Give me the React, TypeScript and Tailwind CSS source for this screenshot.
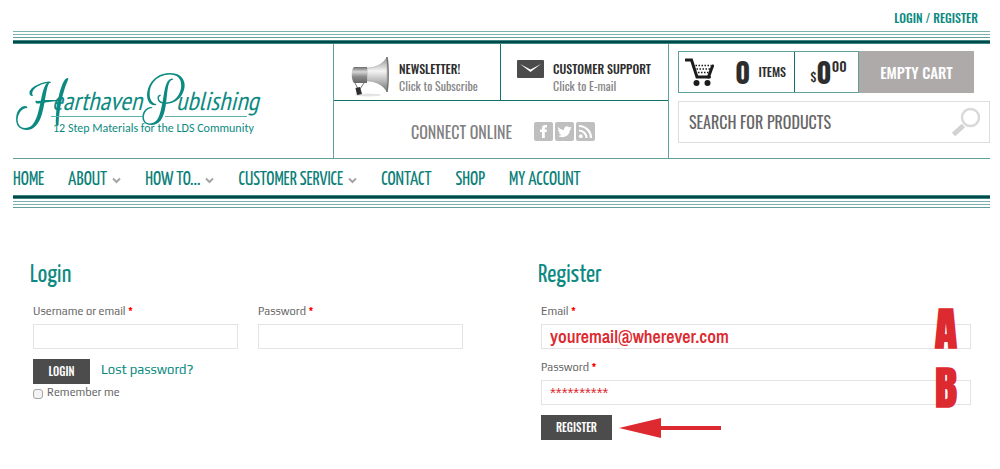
import { useState } from 'react';

const navigation = [
  { name: 'HOME', href: '#home', hasMenu: false },
  { name: 'ABOUT', href: '#about', hasMenu: true },
  { name: 'HOW TO...', href: '#how-to', hasMenu: true },
  { name: 'CUSTOMER SERVICE', href: '#customer-service', hasMenu: true },
  { name: 'CONTACT', href: '#contact', hasMenu: false },
  { name: 'SHOP', href: '#shop', hasMenu: false },
  { name: 'MY ACCOUNT', href: '#my-account', hasMenu: false },
];

function ThinRules() {
  return (
    <div className="flex flex-col gap-[2px]">
      <div className="h-px bg-[#7db1af]"></div>
      <div className="h-px bg-[#7db1af]"></div>
      <div className="h-px bg-[#5f9f9c]"></div>
    </div>
  );
}

function ThickRule() {
  return <div className="h-1 border-y border-[#3f8583] bg-[#004b49]"></div>;
}

function Logo() {
  return (
    <svg width="250" height="80" viewBox="0 0 250 80" role="img" aria-label="Hearthaven Publishing">
      <g fill="#0c8a82">
        <text x="3" y="62" fontSize="70" fontFamily="'Euphoria Script', 'Liberation Serif', cursive">H</text>
        <text x="39" y="49" fontSize="26" fontStyle="italic" fontFamily="'PT Sans Narrow', 'Liberation Sans', sans-serif">earthaven</text>
        <text x="131" y="58" fontSize="70" fontFamily="'Rouge Script', 'Liberation Serif', cursive">P</text>
        <text x="163" y="49" fontSize="26" fontStyle="italic" fontFamily="'PT Sans Narrow', 'Liberation Sans', sans-serif">ublishing</text>
        <text x="40" y="71" fontSize="12" fontFamily="Carlito, Lato, sans-serif">
          12 Step Materials for the LDS Community
        </text>
      </g>
      <path d="M38 55.500H130M152 55.500H234" stroke="#5fb0aa" strokeWidth="1" />
    </svg>
  );
}

function MegaphoneIcon() {
  return (
    <svg width="40" height="42" viewBox="0 0 40 42" aria-hidden="true">
      <defs>
        <linearGradient id="horn" x1="0" y1="0" x2="0" y2="1">
          <stop offset="0" stopColor="#8d8d8d" />
          <stop offset="0.4" stopColor="#f4f4f4" />
          <stop offset="0.7" stopColor="#b5b5b5" />
          <stop offset="1" stopColor="#6f6f6f" />
        </linearGradient>
        <linearGradient id="body" x1="0" y1="0" x2="0" y2="1">
          <stop offset="0" stopColor="#6a6a6a" />
          <stop offset="0.3" stopColor="#d8d8d8" />
          <stop offset="0.6" stopColor="#8c8c8c" />
          <stop offset="1" stopColor="#666" />
        </linearGradient>
      </defs>
      <ellipse cx="18" cy="39" rx="13" ry="1.5" fill="#e4e4e4" />
      <path d="M5 27L8 33M14 27L10 33" stroke="#777" strokeWidth="1" fill="none" />
      <path d="M5.500 32L10 31L12 38L7 39Z" fill="#2d2d2d" />
      <path d="M17 12C26 12 33 8 37 1V36C33 29 26 25 17 25Z" fill="url(#horn)" stroke="#999" strokeWidth="0.5" />
      <path d="M4 11C1 13 1 24 4 27H17V11Z" fill="url(#body)" />
      <path d="M37 1C38.500 10 38.500 27 37 36" stroke="#707070" strokeWidth="1.500" fill="none" />
    </svg>
  );
}

function EnvelopeIcon() {
  return (
    <svg width="27" height="18" viewBox="0 0 27 18" aria-hidden="true">
      <rect width="27" height="18" rx="1" fill="#4c4c4c" />
      <path d="M3 4L13.500 9.500L24 4L13.500 12Z" fill="#fff" />
    </svg>
  );
}

function CartIcon() {
  return (
    <svg width="29" height="28" viewBox="0 0 29 28" fill="none" aria-hidden="true">
      <path d="M1 2H6.500L12 19H24.500" stroke="#1c1c1c" strokeWidth="3" strokeLinecap="round" />
      <path d="M23.500 19L27.500 8" stroke="#1c1c1c" strokeWidth="3" strokeLinecap="round" />
      <path d="M10.500 7.500H26M11.500 11H25M13 14.500H24" stroke="#1c1c1c" strokeWidth="1.500" strokeDasharray="1.500 1.500" />
      <circle cx="11.500" cy="25" r="3" fill="#1c1c1c" />
      <circle cx="22.500" cy="25" r="3" fill="#1c1c1c" />
    </svg>
  );
}

function SearchIcon() {
  return (
    <svg width="30" height="30" viewBox="0 0 30 30" fill="none" aria-hidden="true">
      <circle cx="19.500" cy="10.500" r="8.500" stroke="#d9d9d9" strokeWidth="2.500" />
      <path d="M12.500 18.500L2.500 27.500" stroke="#d2d2d2" strokeWidth="5" />
    </svg>
  );
}

function MenuArrow() {
  return (
    <svg width="9" height="7" viewBox="0 0 9 7" fill="none" aria-hidden="true">
      <path d="M1 1.500L4.500 5L8 1.500" stroke="#a5a5a5" strokeWidth="2" />
    </svg>
  );
}

function SocialLinks() {
  return (
    <div className="flex gap-[2px]">
      <a href="#facebook" aria-label="Facebook">
        <svg width="19" height="19" viewBox="0 0 19 19">
          <rect width="19" height="19" rx="2" fill="#bfbfbf" />
          <path d="M8 16V10H6V7.500H8V6C8 3.800 9.300 3 11 3H13V5.500H11.700C11 5.500 10.800 5.800 10.800 6.400V7.500H13L12.700 10H10.800V16Z" fill="#fff" />
        </svg>
      </a>
      <a href="#twitter" aria-label="Twitter">
        <svg width="19" height="19" viewBox="0 0 19 19">
          <rect width="19" height="19" rx="2" fill="#bfbfbf" />
          <path d="M3 5C5 7 7 7.800 9 8C8.800 5 11 3.800 12.800 4.500C13.500 4.700 14 5.200 14.300 5.300L16.500 5L15.200 6.700L16.500 7L14.800 8.300C14.500 13 10.500 15.800 6 15C4.500 14.700 3.500 14.200 3 13.800C4.800 13.800 5.800 13.300 6.500 12.700C5 12.500 4.200 11.600 4 10.700H5.300C3.800 10 3 8.800 3 7.700L4.200 8C3 7 2.700 6 3 5Z" fill="#fff" />
        </svg>
      </a>
      <a href="#rss" aria-label="RSS">
        <svg width="19" height="19" viewBox="0 0 19 19">
          <rect width="19" height="19" rx="2" fill="#bfbfbf" />
          <circle cx="4.800" cy="14.200" r="1.900" fill="#fff" />
          <path d="M3 8.500A7.500 7.500 0 0 1 10.500 16M3 4A12 12 0 0 1 15 16" stroke="#fff" strokeWidth="2.200" fill="none" />
        </svg>
      </a>
    </div>
  );
}

function Field({
  id,
  label,
  type,
  value,
  onChange,
  className = '',
}: {
  id: string;
  label: string;
  type: string;
  value: string;
  onChange: (value: string) => void;
  className?: string;
}) {
  return (
    <div>
      <label htmlFor={id} className="block text-[11px] leading-4 text-[#666]">
        {label} <span className="font-bold text-[#f00]">*</span>
      </label>
      <input
        id={id}
        type={type}
        value={value}
        onChange={(e) => onChange(e.target.value)}
        className={`mt-[5px] block h-[25px] w-full border border-[#e3e3e3] bg-white px-2 text-[#dd2a30] outline-none ${className}`}
      />
    </div>
  );
}

export default function App() {
  const [search, setSearch] = useState('');
  const [username, setUsername] = useState('');
  const [password, setPassword] = useState('');
  const [remember, setRemember] = useState(false);
  const [email, setEmail] = useState('youremail@wherever.com');
  const [newPassword, setNewPassword] = useState('**********');

  return (
    <div className="bg-white pr-[10px] pl-[13px] font-['Oswald','Roboto_Condensed',sans-serif]">
      {/* Top bar */}
      <div className="flex h-[31px] items-center justify-end pt-1 pr-3">
        <a href="#login" className="text-xs font-medium text-[#0c8a82]">LOGIN / REGISTER</a>
      </div>

      <header>
        <ThinRules />
        <div className="pt-[2px]">
          <ThickRule />
        </div>

        <div className="grid grid-cols-[320fr_336fr_321fr] border-b border-[#5f9f9c]">
          <a href="#home" className="flex items-center">
            <Logo />
          </a>

          <div className="border-x border-[#5f9f9c]">
            <div className="grid h-[57px] grid-cols-2 border-b border-[#12706c]">
              <a href="#newsletter" className="flex items-center border-r border-[#12706c] pt-[10px] pl-4">
                <MegaphoneIcon />
                <span className="ml-[9px] text-xs leading-[17px]">
                  <span className="block font-medium text-[#2d2d2d]">NEWSLETTER!</span>
                  <span className="block text-[#858585]">Click to Subscribe</span>
                </span>
              </a>
              <a href="#support" className="flex items-center pt-[10px] pl-4">
                <span className="mb-4">
                  <EnvelopeIcon />
                </span>
                <span className="ml-[9px] text-xs leading-[17px]">
                  <span className="block font-medium text-[#2d2d2d]">CUSTOMER SUPPORT</span>
                  <span className="block text-[#858585]">Click to E-mail</span>
                </span>
              </a>
            </div>
            <div className="flex h-[57px] items-center justify-center gap-[22px] pt-1 pl-1">
              <span className="text-base text-[#808080]">CONNECT ONLINE</span>
              <SocialLinks />
            </div>
          </div>

          <div className="pt-[7px] pl-[9px]">
            <div className="mr-4 flex h-[42px]">
              <a href="#cart" className="flex flex-1 border border-[#5f9f9c] text-[#2d2d2d]">
                <span className="flex w-[116px] items-center border-r border-[#12706c] pl-[6px]">
                  <CartIcon />
                  <span className="ml-[21px] text-[28px] leading-none font-bold">0</span>
                  <span className="ml-2 text-xs font-medium">ITEMS</span>
                </span>
                <span className="flex flex-1 items-center justify-center pl-1">
                  <span className="pt-[10px] text-xs leading-none font-medium">$</span>
                  <span className="text-[28px] leading-none font-bold">0</span>
                  <span className="pb-3 text-sm leading-none font-medium">00</span>
                </span>
              </a>
              <button type="button" className="w-[115px] bg-[#aeaaaa] text-[15px] font-medium text-white">
                EMPTY CART
              </button>
            </div>
            <form className="mt-2 flex h-[42px] items-center border border-[#ddd] pr-2" onSubmit={(e) => e.preventDefault()}>
              <input
                type="text"
                aria-label="Search for products"
                placeholder="SEARCH FOR PRODUCTS"
                value={search}
                onChange={(e) => setSearch(e.target.value)}
                className="min-w-0 flex-1 pl-[10px] text-base outline-none placeholder:text-[#666]"
              />
              <button type="submit" aria-label="Search">
                <SearchIcon />
              </button>
            </form>
          </div>
        </div>

        <nav className="flex h-9 items-center gap-6 pt-[6px] font-['Yanone_Kaffeesatz','Oswald',sans-serif]">
          {navigation.map((item) => (
            <a key={item.name} href={item.href} className="flex items-center gap-[5px] text-[19px] text-[#0c7f79]">
              {item.name}
              {item.hasMenu && <MenuArrow />}
            </a>
          ))}
        </nav>
        <ThickRule />
        <div className="pt-[2px]">
          <ThinRules />
        </div>
      </header>

      {/* Account forms */}
      <main className="grid grid-cols-2 gap-[75px] pt-[52px] pr-[19px] pl-[17px]">
        <section>
          <h2 className="font-['Yanone_Kaffeesatz','Oswald',sans-serif] text-[25px] leading-8 text-[#0c8a82]">Login</h2>
          <form className="pt-[11px] pl-[3px] font-['Play','Open_Sans',sans-serif]" onSubmit={(e) => e.preventDefault()}>
            <div className="grid grid-cols-2 gap-5">
              <Field id="username" label="Username or email" type="text" value={username} onChange={setUsername} />
              <Field id="password" label="Password" type="password" value={password} onChange={setPassword} />
            </div>
            <div className="mt-[10px] flex gap-[11px]">
              <button type="submit" className="h-[25px] w-[57px] bg-[#4c4c4c] font-['Oswald','Roboto_Condensed',sans-serif] text-[11px] font-medium text-white">
                LOGIN
              </button>
              <a href="#lost-password" className="text-[13px] leading-[22px] text-[#0c8a82]">Lost password?</a>
            </div>
            <label className="flex items-center gap-1 text-[11px] leading-4 text-[#666]">
              <input
                type="checkbox"
                checked={remember}
                onChange={(e) => setRemember(e.target.checked)}
                className="mt-1 size-[10px] appearance-none rounded-[3px] border border-[#a5a5a5] bg-[#f3f3f3] checked:bg-[#0c8a82]"
              />
              Remember me
            </label>
          </form>
        </section>

        <section>
          <h2 className="font-['Yanone_Kaffeesatz','Oswald',sans-serif] text-[25px] leading-8 text-[#0c8a82]">Register</h2>
          <form className="pt-[11px] pl-[3px] font-['Play','Open_Sans',sans-serif]" onSubmit={(e) => e.preventDefault()}>
            <div className="relative">
              <Field id="email" label="Email" type="email" value={email} onChange={setEmail} className="font-['Archivo_Narrow','Liberation_Sans',sans-serif] text-lg font-semibold" />
              <span className="absolute right-[14px] bottom-0 font-['Anton','Oswald',sans-serif] text-[46px] leading-[40px] font-bold text-[#dd2a30]">A</span>
            </div>
            <div className="relative mt-[10px]">
              <Field id="new-password" label="Password" type="text" value={newPassword} onChange={setNewPassword} className="font-['Liberation_Sans',sans-serif] text-[15px]" />
              <span className="absolute right-[14px] -bottom-[3px] font-['Anton','Oswald',sans-serif] text-[46px] leading-[40px] font-bold text-[#dd2a30]">B</span>
            </div>
            <div className="mt-[10px] flex items-center gap-[7px]">
              <button type="submit" className="h-[25px] w-[71px] bg-[#4c4c4c] font-['Oswald','Roboto_Condensed',sans-serif] text-[11px] font-medium text-white">
                REGISTER
              </button>
              <svg width="102" height="22" viewBox="0 0 102 22" aria-hidden="true">
                <path d="M0 11L42 1V9H102V13H42V21Z" fill="#dd2a30" />
              </svg>
            </div>
          </form>
        </section>
      </main>
    </div>
  );
}
